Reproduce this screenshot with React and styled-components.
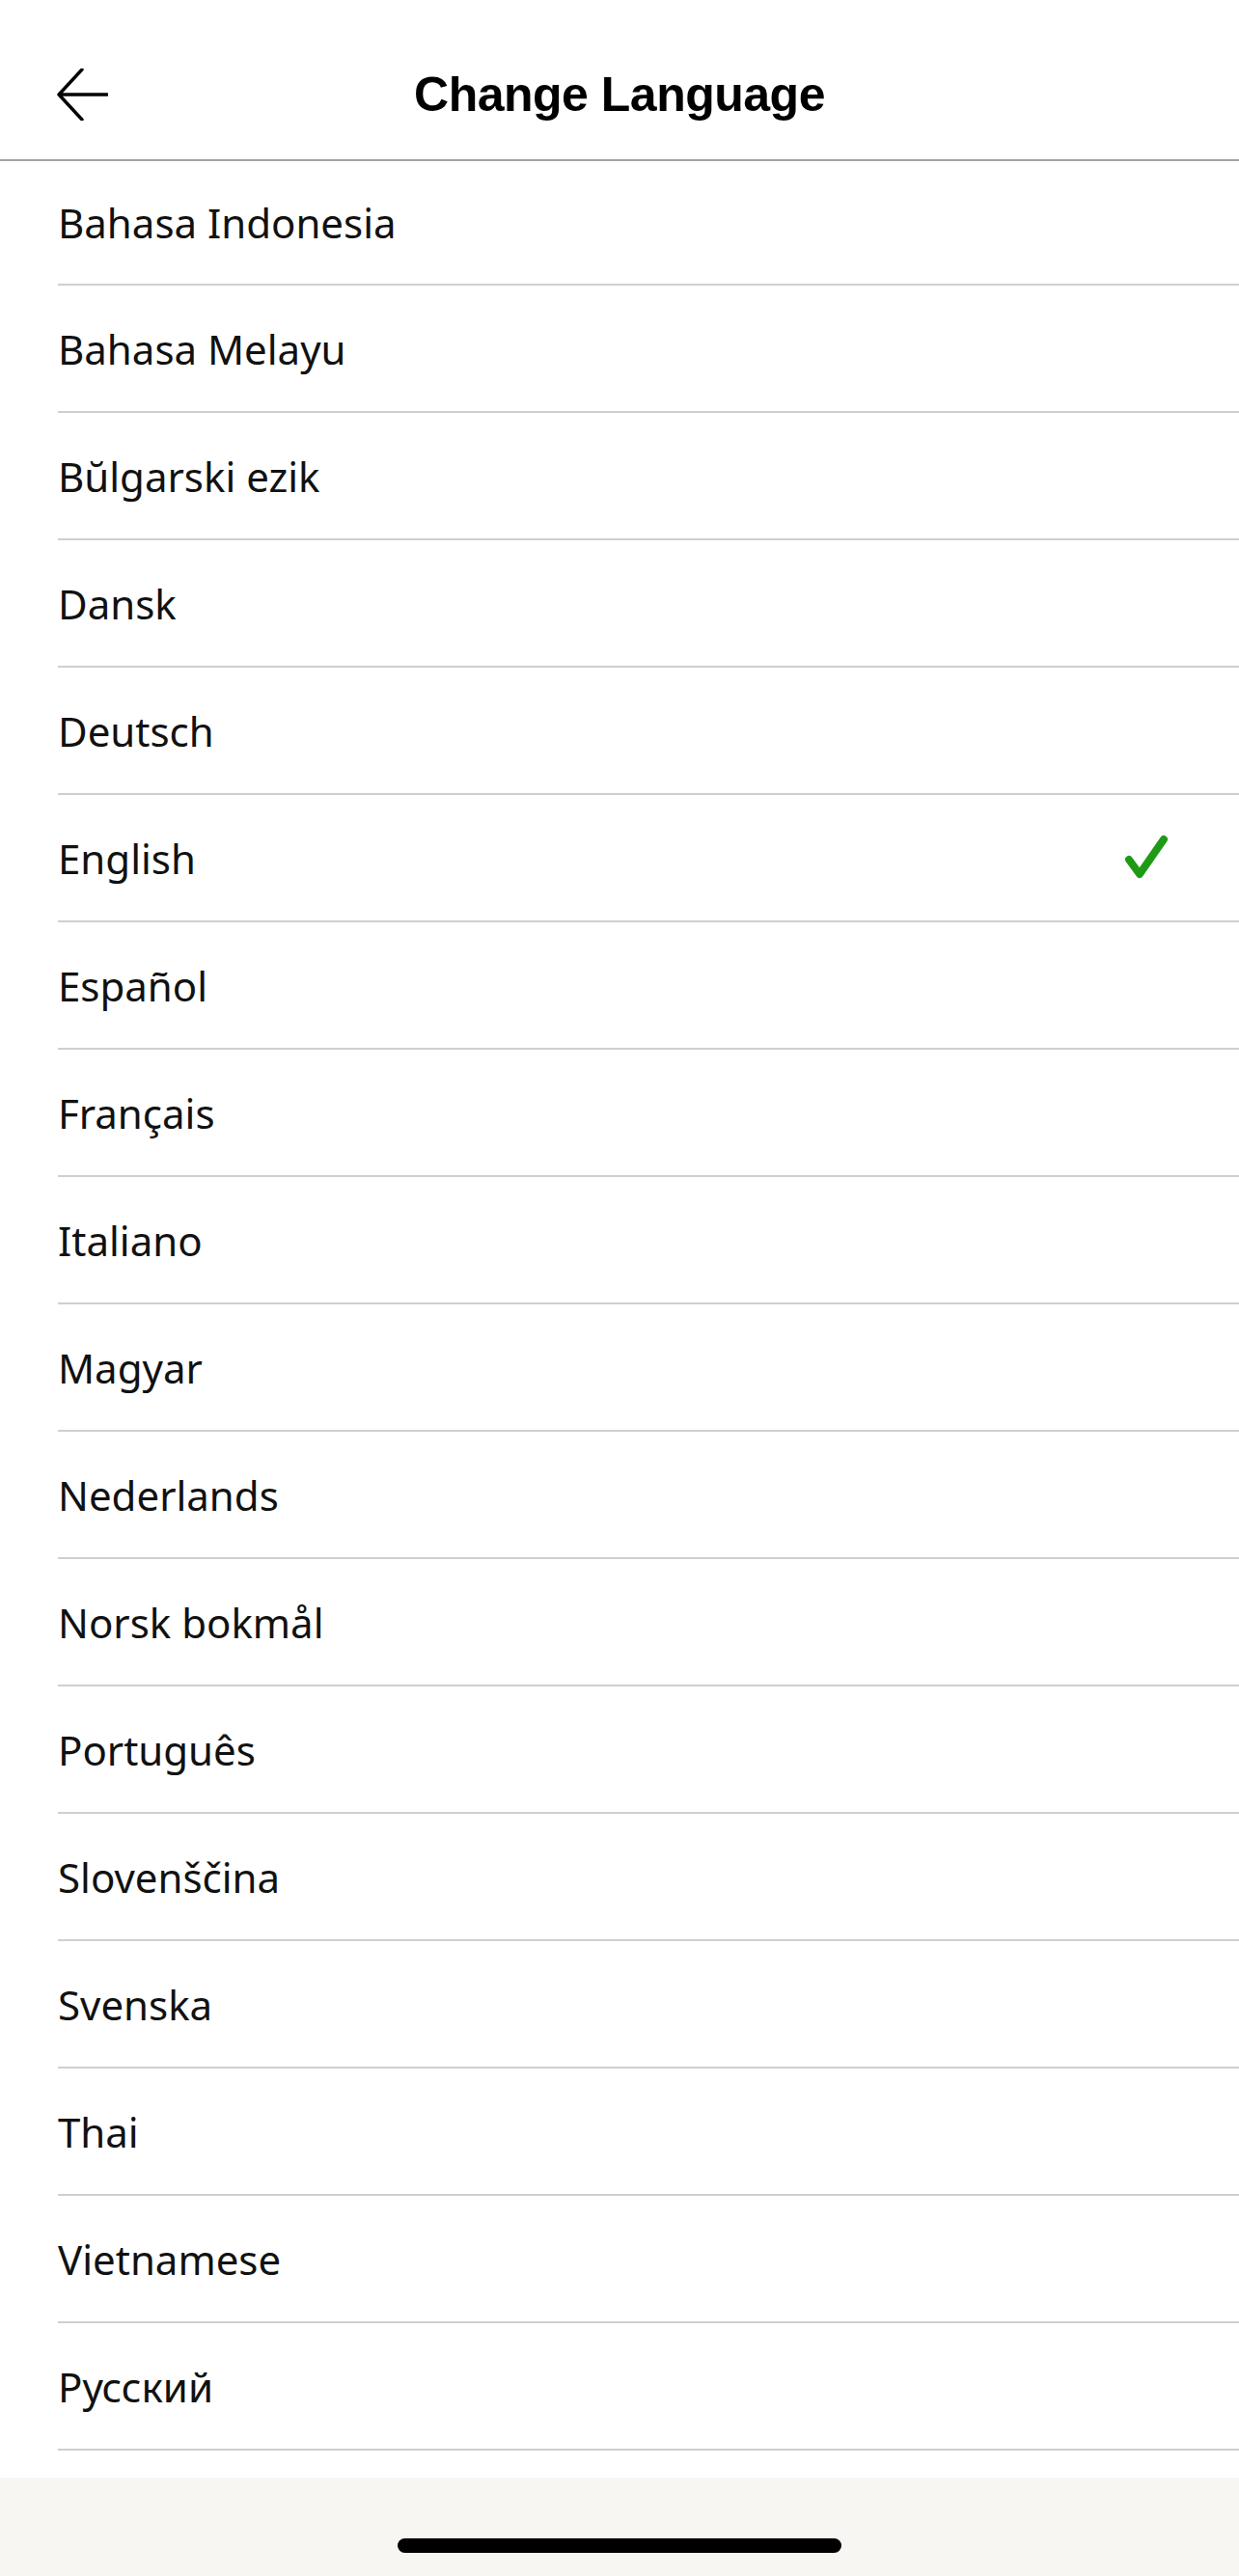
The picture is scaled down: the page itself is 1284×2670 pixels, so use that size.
import React from "react";
import styled, { createGlobalStyle } from "styled-components";

const GlobalStyle = createGlobalStyle`
  html, body {
    margin: 0;
    padding: 0;
    background: #ffffff;
  }
  * {
    box-sizing: border-box;
  }
`;

const LANGUAGES = [
  "Bahasa Indonesia",
  "Bahasa Melayu",
  "Bŭlgarski ezik",
  "Dansk",
  "Deutsch",
  "English",
  "Español",
  "Français",
  "Italiano",
  "Magyar",
  "Nederlands",
  "Norsk bokmål",
  "Português",
  "Slovenščina",
  "Svenska",
  "Thai",
  "Vietnamese",
  "Русский",
];

const Screen = styled.div`
  width: 1284px;
  height: 2670px;
  display: flex;
  flex-direction: column;
  background: #ffffff;
  overflow: hidden;
`;

const Header = styled.header`
  height: 167px;
  flex-shrink: 0;
  padding-top: 30px;
  display: grid;
  grid-template-columns: 120px 1fr 120px;
  align-items: center;
  border-bottom: 2px solid #a3a3a3;
`;

const BackButton = styled.button`
  border: none;
  background: none;
  padding: 0 0 0 58px;
  height: 60px;
  display: flex;
  align-items: center;
  cursor: pointer;
`;

const Title = styled.h1`
  margin: 0;
  text-align: center;
  font-family: "Liberation Sans", Arial, sans-serif;
  font-weight: 700;
  font-size: 50px;
  letter-spacing: -0.5px;
  color: #000000;
`;

const List = styled.ul`
  list-style: none;
  margin: 0;
  padding: 0 0 0 60px;
  flex: 1;
`;

const Row = styled.li`
  height: ${(p) => (p.$first ? "129px" : "132px")};
  display: flex;
  align-items: center;
  justify-content: space-between;
  padding-right: 72px;
  border-bottom: 2px solid #cfcfcf;
  font-family: "Noto Sans", "Open Sans", sans-serif;
  font-size: 42px;
  color: #111111;
`;

const Footer = styled.div`
  height: 102px;
  flex-shrink: 0;
  background: #f7f6f2;
  display: flex;
  justify-content: center;
  padding-top: 63px;
`;

const HomeIndicator = styled.div`
  width: 460px;
  height: 15px;
  border-radius: 8px;
  background: #000000;
`;

function BackArrow() {
  return (
    <svg width="54" height="54" viewBox="0 0 54 54" fill="none">
      <path
        d="M27 1 L3 27 L27 53 M3 27 H53"
        stroke="#000"
        strokeWidth="3.4"
        strokeLinecap="round"
        strokeLinejoin="round"
      />
    </svg>
  );
}

function Check() {
  return (
    <svg width="48" height="50" viewBox="0 0 48 50" fill="none">
      <path
        d="M6 27 L17 42 L42 6"
        stroke="#1f9a16"
        strokeWidth="8"
        strokeLinecap="round"
        strokeLinejoin="round"
      />
    </svg>
  );
}

export default function App() {
  const selected = "English";
  return (
    <>
      <GlobalStyle />
      <Screen>
        <Header>
          <BackButton aria-label="Back">
            <BackArrow />
          </BackButton>
          <Title>Change Language</Title>
          <span />
        </Header>
        <List>
          {LANGUAGES.map((lang, i) => (
            <Row key={lang} $first={i === 0}>
              <span>{lang}</span>
              {lang === selected && <Check />}
            </Row>
          ))}
        </List>
        <Footer>
          <HomeIndicator />
        </Footer>
      </Screen>
    </>
  );
}
